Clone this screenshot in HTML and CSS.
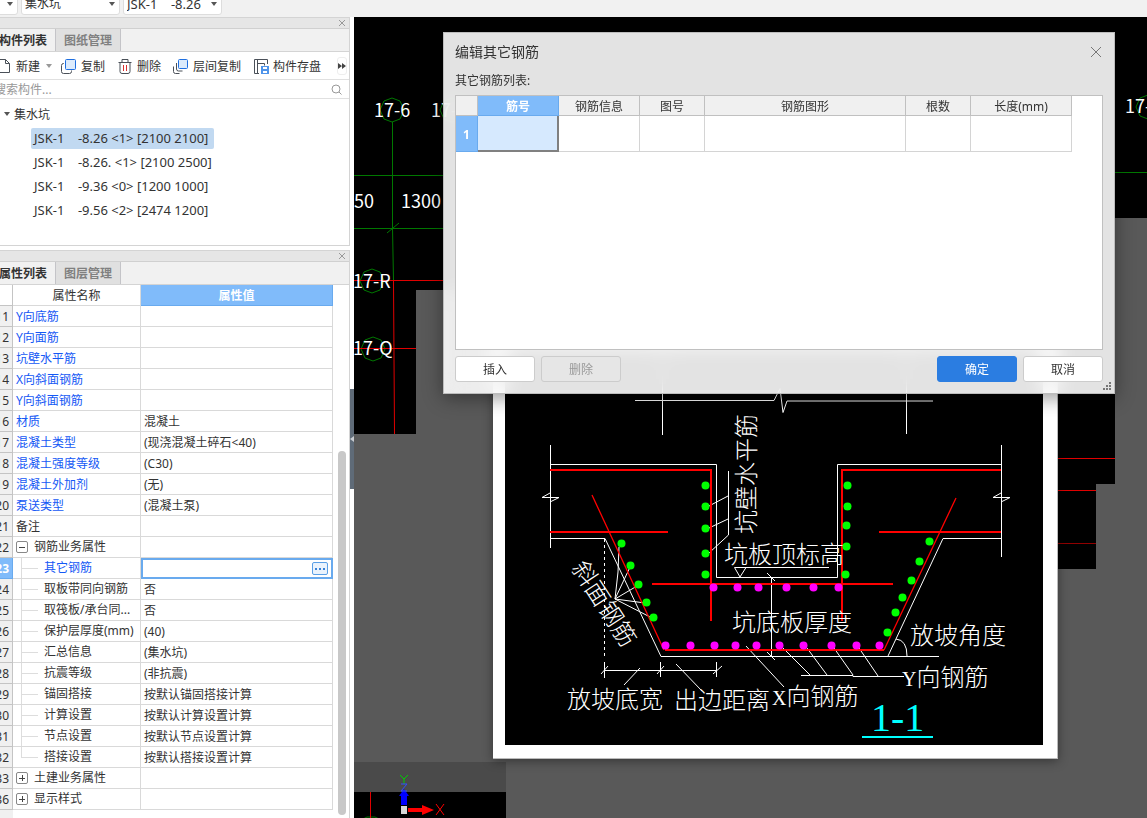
FILE: index.html
```html
<!DOCTYPE html>
<html lang="zh-CN">
<head>
  <meta charset="UTF-8">
  <meta name="viewport" content="width=device-width, initial-scale=1.0">
  <title>编辑其它钢筋</title>
  <link rel="stylesheet" href="styles.css">
</head>
<body>

  <div class="app">

    <header class="topbar">
      <div class="combo combo-floor">
        <select aria-label="楼层"><option></option></select>
        <svg class="caret" viewBox="0 0 6 4"><path d="M0 0h6L3 4z"/></svg>
      </div>
      <div class="combo">
        <select aria-label="构件类型"><option>集水坑</option></select>
        <svg class="caret" viewBox="0 0 6 4"><path d="M0 0h6L3 4z"/></svg>
      </div>
      <div class="combo combo-item">
        <select aria-label="构件"><option>JSK-1&nbsp;&nbsp;&nbsp; -8.26</option></select>
        <svg class="caret" viewBox="0 0 6 4"><path d="M0 0h6L3 4z"/></svg>
      </div>
    </header>

    <div class="workspace">

      <aside class="sidebar">

        <section class="panel">
          <div class="dock-title">
            <button class="dock-close" aria-label="关闭"><svg viewBox="0 0 8 8"><path d="M1 1l6 6M7 1L1 7"/></svg></button>
          </div>
          <div class="tabs">
            <button class="tab active">构件列表</button>
            <button class="tab">图纸管理</button>
          </div>
          <div class="tools">
            <button class="tool tool-new">
              <svg class="icon" viewBox="0 0 16 16"><path class="line" d="M2.5 1.5h7l4 4v9h-11zM9.500 1.500v4h4"/></svg>新建
              <svg class="caret light" viewBox="0 0 6 4"><path d="M0 0h6L3 4z"/></svg>
            </button>
            <button class="tool tool-copy">
              <svg class="icon" viewBox="0 0 16 16"><path class="line" d="M3 5.500H2.500Q.5 5.500.5 7.500V13.500Q.5 15.500 2.500 15.500H8.500Q10.500 15.500 10.500 13.500V12.500"/><rect class="blue" x="4.500" y="1.500" width="10" height="10" rx="1"/></svg>复制
            </button>
            <button class="tool tool-delete">
              <svg class="icon" viewBox="0 0 16 16"><path class="line" d="M1.500 4.500h13M5 4V1.500h6V4M3 5v8.500q0 2 2 2h6q2 0 2-2V5"/><path class="red" d="M6.500 7v6M9.500 7v6"/></svg>删除
            </button>
            <button class="tool tool-layer">
              <svg class="icon" viewBox="0 0 16 16"><path class="line" d="M.5 8.500v5q0 2 2 2h4M3.500 5v6q0 2 2 2h4"/><rect class="blue" x="5.500" y="1.500" width="9" height="9" rx="1"/></svg>层间复制
            </button>
            <button class="tool tool-save">
              <svg class="icon" viewBox="0 0 16 16"><path class="line" d="M6 15.500H1.500v-14h13V6M4.500 1.500v14M4.500 5.500h7v2"/><path class="fill" d="M8 8h8v8H8z"/><path class="white" d="M10 9h4v2h-4zM10 13h4v2h-4z"/></svg>构件存盘
            </button>
            <button class="more" aria-label="更多"><svg viewBox="0 0 8 6"><path d="M0 0l4 3-4 3zM4 0l4 3-4 3z"/></svg></button>
          </div>
          <div class="search">
            <input type="text" placeholder="搜索构件..." aria-label="搜索构件">
            <svg viewBox="0 0 11 11"><circle cx="5" cy="5" r="4"/><path d="M8 8l2.500 2.500"/></svg>
          </div>
          <ul class="tree">
            <li class="root"><svg class="caret" viewBox="0 0 6 4"><path d="M0 0h6L3 4z"/></svg>集水坑</li>
            <li><span class="item selected">JSK-1    -8.26 &lt;1&gt; [2100 2100]</span></li>
            <li><span class="item">JSK-1    -8.26. &lt;1&gt; [2100 2500]</span></li>
            <li><span class="item">JSK-1    -9.36 &lt;0&gt; [1200 1000]</span></li>
            <li><span class="item">JSK-1    -9.56 &lt;2&gt; [2474 1200]</span></li>
          </ul>
        </section>

        <section class="panel panel-props">
          <div class="dock-title">
            <button class="dock-close" aria-label="关闭"><svg viewBox="0 0 8 8"><path d="M1 1l6 6M7 1L1 7"/></svg></button>
          </div>
          <div class="tabs">
            <button class="tab active">属性列表</button>
            <button class="tab">图层管理</button>
          </div>
          <div class="props-wrap">
            <div class="props-scroll">
              <table class="props">
                <thead>
                  <tr><th class="num"></th><th class="name">属性名称</th><th class="current">属性值</th></tr>
                </thead>
                <tbody>
                  <tr><th class="num">11</th><td class="key">Y向底筋</td><td></td></tr>
                  <tr><th class="num">12</th><td class="key">Y向面筋</td><td></td></tr>
                  <tr><th class="num">13</th><td class="key">坑壁水平筋</td><td></td></tr>
                  <tr><th class="num">14</th><td class="key">X向斜面钢筋</td><td></td></tr>
                  <tr><th class="num">15</th><td class="key">Y向斜面钢筋</td><td></td></tr>
                  <tr><th class="num">16</th><td class="key">材质</td><td>混凝土</td></tr>
                  <tr><th class="num">17</th><td class="key">混凝土类型</td><td>(现浇混凝土碎石&lt;40)</td></tr>
                  <tr><th class="num">18</th><td class="key">混凝土强度等级</td><td>(C30)</td></tr>
                  <tr><th class="num">19</th><td class="key">混凝土外加剂</td><td>(无)</td></tr>
                  <tr><th class="num">20</th><td class="key">泵送类型</td><td>(混凝土泵)</td></tr>
                  <tr><th class="num">21</th><td>备注</td><td></td></tr>
                  <tr><th class="num">22</th><td><div class="group"><button class="toggle open" aria-label="折叠"></button>钢筋业务属性</div></td><td></td></tr>
                  <tr><th class="num current">23</th><td class="key"><div class="child">其它钢筋</div></td>
                    <td class="editing"><div class="editor"><input type="text" aria-label="其它钢筋"><button aria-label="编辑"><i></i><i></i><i></i></button></div></td></tr>
                  <tr><th class="num">24</th><td><div class="child">取板带同向钢筋</div></td><td>否</td></tr>
                  <tr><th class="num">25</th><td><div class="child">取筏板/承台同...</div></td><td>否</td></tr>
                  <tr><th class="num">26</th><td><div class="child">保护层厚度(mm)</div></td><td>(40)</td></tr>
                  <tr><th class="num">27</th><td><div class="child">汇总信息</div></td><td>(集水坑)</td></tr>
                  <tr><th class="num">28</th><td><div class="child">抗震等级</div></td><td>(非抗震)</td></tr>
                  <tr><th class="num">29</th><td><div class="child">锚固搭接</div></td><td>按默认锚固搭接计算</td></tr>
                  <tr><th class="num">30</th><td><div class="child">计算设置</div></td><td>按默认计算设置计算</td></tr>
                  <tr><th class="num">31</th><td><div class="child">节点设置</div></td><td>按默认节点设置计算</td></tr>
                  <tr><th class="num">32</th><td><div class="child last">搭接设置</div></td><td>按默认搭接设置计算</td></tr>
                  <tr><th class="num">33</th><td><div class="group"><button class="toggle" aria-label="展开"></button>土建业务属性</div></td><td></td></tr>
                  <tr><th class="num">36</th><td><div class="group"><button class="toggle" aria-label="展开"></button>显示样式</div></td><td></td></tr>
                </tbody>
              </table>
              <div class="num-fill"></div>
            </div>
            <div class="scrollbar"><div class="thumb"></div></div>
          </div>
        </section>
      </aside>

      <div class="splitter">
        <button aria-label="收起"><svg viewBox="0 0 4 6"><path d="M4 0v6L0 3z"/></svg></button>
      </div>

      <main class="canvas">

        <!-- model view -->
        <svg class="cad">
          <g transform="translate(-354 -17)">
            <path class="hole" d="M354 17H2400V218H1115V484H1096V569H900V290H416V434H354z"/>
            <path fill="#4a4a4a" d="M354 762h152v30H354z"/>
            <path class="hole" d="M354 792h152v400H354z"/>
            <g class="axis">
              <path d="M354 175.500H443M354 228.500H443M392.500 122V228L393.500 280M387 233l12-10M1115 172.500H1147"/>
              <path d="M392 98l8 3 4 9-4 9-8 3-8-3-4-9 4-9z"/>
              <path d="M452 98l8 3 4 9-4 9-8 3-8-3-4-9 4-9z"/>
              <path d="M372 269l8 3 4 9-4 9-8 3-8-3-4-9 4-9z"/>
              <path d="M373 337l8 3 4 9-4 9-8 3-8-3-4-9 4-9z"/>
              <path d="M1148 95l8 3 4 9-4 9-8 3-8-3-4-9 4-9z"/>
              <path d="M363 819l4-2 8 0 4 2"/>
            </g>
            <path class="beam" d="M354 280.500H443M354 348.500H416M393.500 281L394.500 434M1057 458.500H1115M1057 490.500H1096M370.500 792V818"/>
            <path class="beam dim" d="M1057 543.500H1096"/>
            <g class="cad-text">
              <text x="374" y="117">17-6</text>
              <text x="431" y="117">17-7</text>
              <text x="354" y="208">50</text>
              <text x="401" y="208">1300</text>
              <text x="353" y="288">17-R</text>
              <text x="353" y="355">17-Q</text>
              <text x="1125" y="113">17-8</text>
            </g>
            <!-- coordinate gizmo -->
            <path stroke="#00d000" fill="none" d="M400 775l4 4 4-4M404 779v5"/>
            <path fill="#0000ff" d="M404 789l5 7h-2v9h-6v-9h-2z"/>
            <path stroke="#3050ff" fill="none" d="M401 784h6l-6 7h6"/>
            <path fill="#d8d8d8" d="M401 806h6v8h-6z"/>
            <path fill="#f00" d="M408 808h14v-3l12 5-12 5v-3h-14z"/>
            <path stroke="#f00" fill="none" d="M436 804l8 11M444 804l-8 11"/>
          </g>
        </svg>

        <!-- section preview -->
        <section class="preview">
          <svg class="section" viewBox="505 346 538 399">
            <g class="w">
              <path d="M635 400.500H774l6-12 3 24 4-11.500H933M662.500 346V435M906.500 346V434"/>
              <path d="M550.500 445V548M1001.500 445V557"/>
              <path d="M550 464.500H716.500V577.500H837.500V464.500H1001"/>
              <path d="M550 538.500H605L661 656.500H939M1001 538.500H943L888 656"/>
              <path d="M550 493l-8 4.500h17l-8 4M1001 493l-8 4.500h17l-8 4"/>
              <path stroke-dasharray="3 3" d="M604.500 539V656"/>
              <path d="M728.500 471V535L709 553M709 506l19-10M709 528l19-9"/>
              <path d="M615 599l3-27 1-25M615 599l16-34M615 599l22-13M615 599l30 4M615 599l37 19"/>
              <path d="M829 567.500H734.500L740 577l6-9.500"/>
              <path d="M771.500 577V656M767 573l8 8M767 652l8 8"/>
              <path d="M604 670.500H717M604.500 662v16M660.500 662v15M716.500 662v15M601 674l7-8M657 674l7-8M713 674l9-8"/>
              <path d="M640 668l-16 17M676 664l26 27M746 646l38 41"/>
              <path d="M783 648l27 27M807 648l20 27M834 648l19 27M859 648l19 28M801 675.500H853V676.500H904"/>
              <path d="M896 639q11 1 11 17"/>
            </g>
            <g class="r">
              <path d="M550 470H711V621M1001 470H842V621M550 532H668M879 532H1001M652 584H893"/>
              <path d="M665 650H884"/>
              <path class="thin" d="M592 495L664 650M884 650L956 498"/>
            </g>
            <g class="g">
              <circle cx="705.5" cy="485.5" r="4"/><circle cx="705.5" cy="506.500" r="4"/><circle cx="705.5" cy="528.500" r="4"/><circle cx="705.5" cy="553.500" r="4"/><circle cx="705.5" cy="574.500" r="4"/>
              <circle cx="847.5" cy="485.5" r="4"/><circle cx="847.5" cy="506.500" r="4"/><circle cx="846.5" cy="525.500" r="4"/><circle cx="846.5" cy="546.500" r="4"/><circle cx="845.5" cy="574.500" r="4"/>
              <circle cx="621.500" cy="543.500" r="4"/><circle cx="630.500" cy="565.500" r="4"/><circle cx="638.500" cy="584.500" r="4"/><circle cx="646.500" cy="602.500" r="4"/><circle cx="653.500" cy="617.500" r="4"/>
              <circle cx="929.500" cy="541.500" r="4"/><circle cx="919.500" cy="561.500" r="4"/><circle cx="911.500" cy="580.500" r="4"/><circle cx="902.500" cy="597.500" r="4"/><circle cx="895.500" cy="612.500" r="4"/><circle cx="887.500" cy="632.500" r="4"/>
            </g>
            <g class="m">
              <circle cx="713.500" cy="587.500" r="4"/><circle cx="737.500" cy="587.500" r="4"/><circle cx="758.500" cy="587.500" r="4"/><circle cx="786.500" cy="587.500" r="4"/><circle cx="813.500" cy="587.500" r="4"/><circle cx="838.500" cy="587.500" r="4"/>
              <circle cx="665.500" cy="645.500" r="4"/><circle cx="690.500" cy="645.500" r="4"/><circle cx="714.500" cy="645.500" r="4"/><circle cx="735.500" cy="645.500" r="4"/><circle cx="756.500" cy="645.500" r="4"/><circle cx="779.500" cy="645.500" r="4"/><circle cx="803.500" cy="645.500" r="4"/><circle cx="831.500" cy="645.500" r="4"/><circle cx="856.500" cy="645.500" r="4"/><circle cx="879.500" cy="645.500" r="4"/>
            </g>
            <g class="labels">
              <text x="724" y="563">坑板顶标高</text>
              <text x="732" y="631">坑底板厚度</text>
              <text x="910" y="644">放坡角度</text>
              <text x="902" y="686"><tspan class="latin">Y</tspan>向钢筋</text>
              <text x="772" y="705"><tspan class="latin">X</tspan>向钢筋</text>
              <text x="567" y="708">放坡底宽</text>
              <text x="674" y="709">出边距离</text>
              <text transform="translate(755 534) rotate(-90)">坑壁水平筋</text>
              <text transform="translate(571 568) rotate(57)">斜面钢筋</text>
            </g>
            <text class="mark" x="871" y="731">1-1</text>
            <path class="mark-line" d="M862 737H933"/>
          </svg>
        </section>

        <!-- rebar editor -->
        <section class="dialog" role="dialog" aria-labelledby="dialogTitle">
          <div class="dialog-head">
            <h1 id="dialogTitle">编辑其它钢筋</h1>
            <button class="dialog-close" aria-label="关闭"><svg viewBox="0 0 12 12"><path d="M1 1l10 10M11 1L1 11"/></svg></button>
          </div>
          <p class="dialog-label">其它钢筋列表:</p>
          <div class="grid-box">
            <table class="rebar">
              <thead>
                <tr>
                  <th class="c-num"></th>
                  <th class="c-id current">筋号</th>
                  <th class="c-info">钢筋信息</th>
                  <th class="c-fig">图号</th>
                  <th class="c-shape">钢筋图形</th>
                  <th class="c-count">根数</th>
                  <th class="c-len">长度(mm)</th>
                </tr>
              </thead>
              <tbody>
                <tr><th class="current">1</th><td class="focus"></td><td></td><td></td><td></td><td></td><td></td></tr>
              </tbody>
            </table>
          </div>
          <div class="dialog-foot">
            <button class="btn">插入</button>
            <button class="btn" disabled>删除</button>
            <span class="spacer"></span>
            <button class="btn primary">确定</button>
            <button class="btn">取消</button>
          </div>
          <svg class="grip" viewBox="0 0 8 8"><path d="M6 0h2v2H6zM3 3h2v2H3zM6 3h2v2H6zM0 6h2v2H0zM3 6h2v2H3zM6 6h2v2H6z"/></svg>
        </section>

      </main>
    </div>
  </div>

</body>
</html>
```

FILE: styles.css
```css
* {
  box-sizing: border-box;
}
body {
  margin: 0;
  overflow: hidden;
  font-family: "Noto Sans", "Noto Sans CJK SC", sans-serif;
  font-size: 12px;
  color: #333;
  background: #f1f1f1;
}
button, input, select {
  font: inherit;
  color: inherit;
  padding: 0;
  margin: 0;
  border: none;
  background: none;
}
svg {
  display: block;
  flex: none;
}
.app {
  display: flex;
  flex-direction: column;
  height: 100vh;
  margin-left: -20px;
}

/* top bar */
.topbar {
  display: flex;
  flex: none;
  align-items: flex-end;
  gap: 3px;
  height: 17px;
  padding: 0 0 2px;
  overflow: hidden;
}
.combo {
  display: flex;
  flex: none;
  align-items: center;
  width: 99px;
  height: 24px;
  padding: 1px 4px 0 3px;
  border: 1px solid #ddd;
  border-radius: 3px;
  background: #fff;
}
.combo-floor {
  width: 38px;
}
.combo-item {
  font-size: 13px;
}
.combo select {
  flex: 1;
  min-width: 0;
  appearance: none;
  outline: none;
}
.caret {
  width: 6px;
  height: 4px;
  fill: #555;
}
.caret.light {
  fill: #999;
}

.workspace {
  display: flex;
  flex: 1;
  min-height: 0;
}

/* side panels */
.sidebar {
  display: flex;
  flex-direction: column;
  flex: none;
  gap: 4px;
  width: 370px;
  background: #fff;
}
.panel {
  display: flex;
  flex-direction: column;
  border: 1px solid #d4d4d4;
}
.panel-props {
  flex: 1;
  min-height: 0;
  border-bottom: none;
}
.dock-title {
  display: flex;
  justify-content: flex-end;
  align-items: center;
  height: 11px;
  padding-right: 3px;
  background: #e6e6e6;
  border-bottom: 1px solid #d0d0d0;
}
.dock-close svg {
  width: 8px;
  height: 8px;
  stroke: #999;
}
.tabs {
  display: flex;
  flex: none;
  height: 23px;
  background: #f1f1f1;
  border-bottom: 1px solid #d4d4d4;
}
.tab {
  width: 65px;
  font-weight: bold;
  color: #808080;
  background: #e0e0e0;
  border-right: 1px solid #c4c4c8;
}
.tab.active {
  width: 75px;
  padding-left: 10px;
  color: #333;
  background: #f1f1f1;
}
.tools {
  display: flex;
  align-items: center;
  height: 28px;
  border-bottom: 1px solid #e0e0e0;
}
.tool {
  display: flex;
  align-items: center;
  gap: 4px;
  margin-right: 12px;
  white-space: nowrap;
}
.tool-new {
  margin-right: 9px;
  padding-left: 15px;
}
.tool-new .caret {
  margin-left: 2px;
}
.icon {
  width: 16px;
  height: 16px;
  fill: none;
}
.icon .line {
  stroke: #4a5058;
}
.icon .blue {
  fill: #dcebfc;
  stroke: #1f6fe0;
}
.icon .red {
  stroke: #d83030;
}
.icon .fill {
  fill: #4f94ea;
}
.icon .white {
  fill: #fff;
}
.more {
  display: flex;
  align-items: center;
  justify-content: center;
  width: 10px;
  height: 18px;
  margin-left: auto;
  margin-right: 2px;
  border: 1px solid #eee;
  border-radius: 3px;
}
.more svg {
  width: 8px;
  height: 6px;
  fill: #444;
}
.search {
  display: flex;
  align-items: center;
  height: 19px;
  padding: 0 7px 0 13px;
  border-bottom: 1px solid #e0e0e0;
}
.search input {
  flex: 1;
  min-width: 0;
  outline: none;
}
.search input::placeholder {
  color: #999;
}
.search svg {
  width: 11px;
  height: 11px;
  fill: none;
  stroke: #999;
}
.tree {
  height: 146px;
  margin: 0;
  padding: 3px 0 0 50px;
  list-style: none;
}
.tree li {
  display: flex;
  align-items: center;
  height: 24px;
}
.tree .root {
  gap: 4px;
  margin-left: -27px;
}
.item {
  height: 21px;
  padding: 0 6px 0 3px;
  border-radius: 2px;
  font-size: 13px;
  line-height: 20px;
  white-space: pre;
}
.item.selected {
  background: #c1d9f1;
}

/* property table */
.props-wrap {
  display: flex;
  flex: 1;
  min-height: 0;
}
.props-scroll {
  display: flex;
  flex-direction: column;
  flex: 1;
  min-width: 0;
}
.props, .rebar {
  border-collapse: separate;
  border-spacing: 0;
  table-layout: fixed;
}
.props {
  width: 100%;
}
.props th, .props td {
  height: 21px;
  padding: 2px 0 0 3px;
  border-right: 1px solid #d9d9d9;
  border-bottom: 1px solid #d9d9d9;
  line-height: 18px;
  font-weight: normal;
  text-align: left;
  white-space: nowrap;
}
.props thead th {
  padding-left: 0;
  text-align: center;
}
.props .num {
  width: 32px;
  padding-right: 3px;
  text-align: right;
  background: #f0f0f0;
  border-color: #c4c4c4;
}
.props thead .num {
  background: #fff;
}
.props .name {
  width: 128px;
}
.props .key {
  color: #1458f5;
}
.props thead .current, .props .num.current, .rebar .current {
  color: #fff;
  font-weight: bold;
  background: #80bbfa;
  border-color: #69aaee;
}
.num-fill {
  flex: 1;
  width: 32px;
  background: #f0f0f0;
}
.group, .child {
  display: flex;
  align-items: center;
  height: 20px;
  margin-top: -2px;
  line-height: 22px;
}
.group {
  gap: 6px;
}
.toggle {
  width: 12px;
  height: 12px;
  border: 1px solid #888;
  border-radius: 2px;
  background: linear-gradient(#444, #444) center / 6px 1px no-repeat,
              linear-gradient(#444, #444) center / 1px 6px no-repeat;
}
.toggle.open {
  background: linear-gradient(#444, #444) center / 6px 1px no-repeat;
}
/* connector lines in front of nested rows */
.child::before {
  content: "";
  width: 17px;
  height: 20px;
  margin: 0 6px 0 5px;
  background: linear-gradient(#ddd, #ddd) 0 50% / 17px 1px no-repeat,
              linear-gradient(#ddd, #ddd) 0 0 / 1px 100% no-repeat;
}
.child.last::before {
  background: linear-gradient(#ddd, #ddd) 0 50% / 17px 1px no-repeat,
              linear-gradient(#ddd, #ddd) 0 0 / 1px 50% no-repeat;
}
.props .editing {
  padding: 0;
  border: none;
}
.editor {
  display: flex;
  align-items: center;
  height: 21px;
  padding-right: 3px;
  border: 2px solid #69aaee;
}
.editor input {
  flex: 1;
  min-width: 0;
  outline: none;
}
.editor button {
  display: flex;
  align-items: center;
  justify-content: center;
  gap: 2px;
  width: 16px;
  height: 13px;
  border: 1px solid #5a9fe6;
  border-radius: 2px;
  background: #eaf3fd;
}
.editor i {
  width: 2px;
  height: 2px;
  background: #3b82d6;
}
.scrollbar {
  display: flex;
  flex-direction: column;
  width: 16px;
  padding: 166px 3px 3px 5px;
}
.thumb {
  flex: 1;
  border-radius: 4px;
  background: #c8c8c8;
}
.splitter {
  display: flex;
  flex: none;
  width: 4px;
  padding-top: 372px;
  background: #fff;
}
.splitter button {
  display: flex;
  align-items: center;
  width: 4px;
  height: 100px;
  background: #5f6b78;
}
.splitter svg {
  width: 4px;
  height: 6px;
  fill: #c8ccd2;
}

/* drawing area */
.canvas {
  position: relative;
  flex: 1;
  min-width: 0;
  overflow: hidden;
  background: #595959;
}
.cad {
  width: 100%;
  height: 100%;
}
.cad .hole {
  fill: #000;
}
.axis {
  fill: none;
  stroke: #007800;
}
.beam {
  fill: none;
  stroke: #e00000;
}
.beam.dim {
  stroke: #900000;
}
.cad-text {
  fill: #fff;
  font-family: "Noto Sans CJK SC", sans-serif;
  font-size: 18px;
}
.preview {
  position: absolute;
  left: 139px;
  top: 317px;
  width: 565px;
  padding: 12px 14px 13px 12px;
  background: #fff;
  border-right: 1px solid #bbb;
  border-bottom: 1px solid #bbb;
  box-shadow: 0 2px 10px rgba(0, 0, 0, 0.4);
}
.section {
  width: 100%;
  background: #000;
}
.section .w {
  fill: none;
  stroke: #fff;
}
.section .r {
  fill: none;
  stroke: #f00;
  stroke-width: 2;
}
.section .thin {
  stroke-width: 1.3;
}
.section .g {
  fill: #0f0;
}
.section .m {
  fill: #f0f;
}
.labels {
  fill: #fff;
  font-family: "Noto Sans CJK SC", sans-serif;
  font-size: 24px;
  font-weight: 300;
}
.labels .latin {
  font-family: "Liberation Serif", serif;
  font-size: 20px;
}
.mark {
  fill: #0ff;
  font-family: "Liberation Serif", serif;
  font-size: 40px;
}
.mark-line {
  stroke: #0ff;
  stroke-width: 2;
}

/* dialog */
.dialog {
  position: absolute;
  left: 89px;
  top: 15px;
  display: flex;
  flex-direction: column;
  width: 672px;
  padding: 0 11px 11px;
  border: 1px solid #bdbdbd;
  background: rgba(255, 255, 255, 0.89);
  backdrop-filter: blur(10px);
  box-shadow: 0 4px 18px rgba(0, 0, 0, 0.4);
}
.dialog-head {
  display: flex;
  align-items: center;
  justify-content: space-between;
  height: 38px;
  padding-right: 1px;
}
.dialog h1 {
  margin: 0;
  padding-bottom: 2px;
  font-size: 14px;
  font-weight: normal;
}
.dialog-close svg {
  width: 12px;
  height: 12px;
  stroke: #777;
}
.dialog-label {
  height: 24px;
  margin: 0;
  line-height: 20px;
}
.grid-box {
  height: 255px;
  border: 1px solid #c0c0c0;
  background: #fff;
}
.rebar {
  width: 616px;
}
.rebar th {
  height: 20px;
  padding: 2px 0 0;
  font-weight: normal;
  line-height: 17px;
  background: #f0f0f0;
  border-right: 1px solid #c0c0c0;
  border-bottom: 1px solid #c0c0c0;
}
.rebar td {
  height: 36px;
  border-right: 1px solid #d4d4d4;
  border-bottom: 1px solid #d4d4d4;
}
.rebar .focus {
  background: #d6e9fe;
  border-right: 2px solid #808080;
  border-bottom: 2px solid #808080;
}
.c-num { width: 22px; }
.c-id { width: 81px; }
.c-info { width: 81px; }
.c-fig { width: 65px; }
.c-shape { width: 201px; }
.c-count { width: 65px; }
.c-len { width: 101px; }
.dialog-foot {
  display: flex;
  gap: 6px;
  padding-top: 6px;
}
.spacer {
  flex: 1;
}
.btn {
  width: 80px;
  height: 26px;
  border: 1px solid #ccc;
  border-radius: 3px;
  background: #fff;
}
.btn:disabled {
  color: #999;
  background: #e6e6e6;
}
.btn.primary {
  color: #fff;
  background: #2b7de1;
  border-color: #2b7de1;
}
.grip {
  position: absolute;
  right: 3px;
  bottom: 3px;
  width: 8px;
  height: 8px;
  fill: #777;
}
```
